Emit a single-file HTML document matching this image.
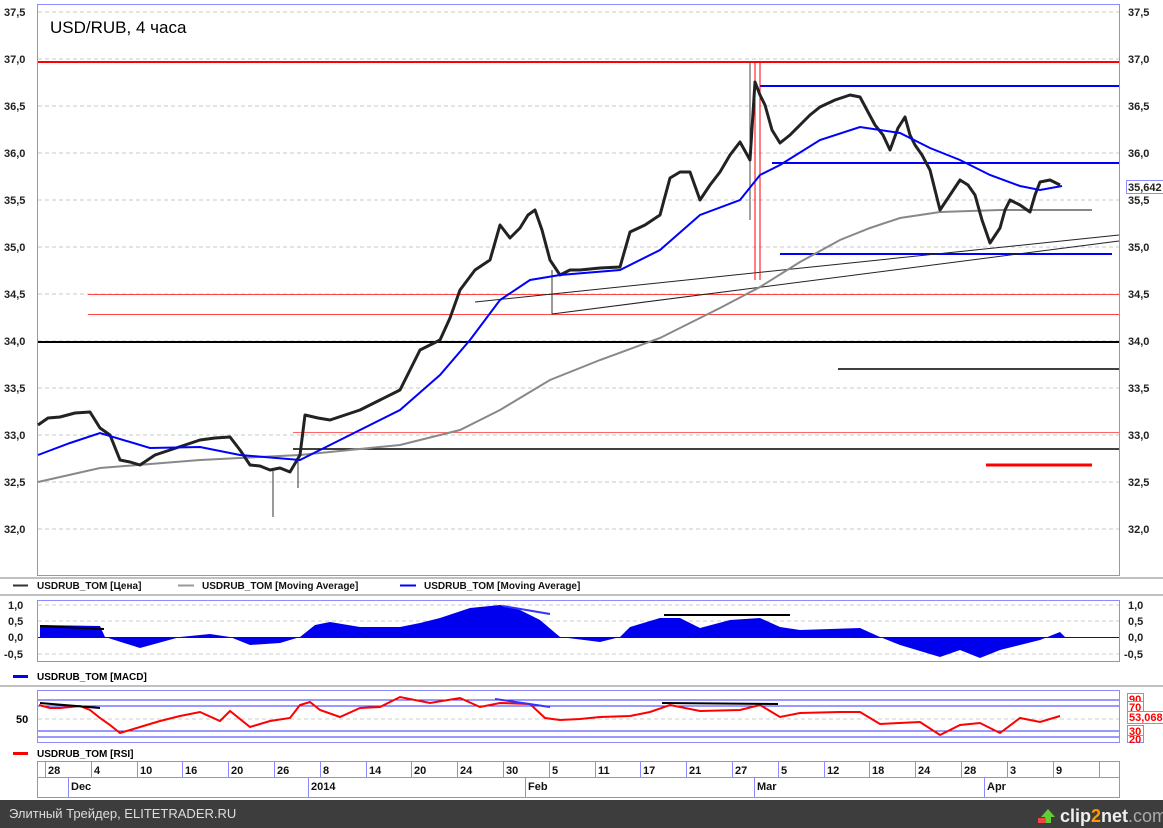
<!DOCTYPE html>
<html><head><meta charset="utf-8"><style>
body{margin:0;width:1163px;height:828px;overflow:hidden;background:#fff;font-family:"Liberation Sans",Arial,sans-serif}
svg{display:block}
</style></head><body>
<svg width="1163" height="828" xmlns="http://www.w3.org/2000/svg" font-family="Liberation Sans, Arial, sans-serif">
<rect width="1163" height="828" fill="#fff"/>
<rect x="37.5" y="4.5" width="1082" height="571" fill="none" stroke="#8c8cff"/>
<g stroke="#c8c8c8" stroke-dasharray="4,3">
<line x1="38" x2="1119" y1="12" y2="12"/><line x1="38" x2="1119" y1="59" y2="59"/><line x1="38" x2="1119" y1="106" y2="106"/><line x1="38" x2="1119" y1="153" y2="153"/><line x1="38" x2="1119" y1="200" y2="200"/><line x1="38" x2="1119" y1="247" y2="247"/><line x1="38" x2="1119" y1="294" y2="294"/><line x1="38" x2="1119" y1="341" y2="341"/><line x1="38" x2="1119" y1="388" y2="388"/><line x1="38" x2="1119" y1="435" y2="435"/><line x1="38" x2="1119" y1="482" y2="482"/><line x1="38" x2="1119" y1="529" y2="529"/>
</g>
<g font-size="11" font-weight="bold" fill="#222">
<text x="4" y="16">37,5</text><text x="4" y="63">37,0</text><text x="4" y="110">36,5</text><text x="4" y="157">36,0</text><text x="4" y="204">35,5</text><text x="4" y="251">35,0</text><text x="4" y="298">34,5</text><text x="4" y="345">34,0</text><text x="4" y="392">33,5</text><text x="4" y="439">33,0</text><text x="4" y="486">32,5</text><text x="4" y="533">32,0</text>
<text x="1128" y="16">37,5</text><text x="1128" y="63">37,0</text><text x="1128" y="110">36,5</text><text x="1128" y="157">36,0</text><text x="1128" y="204">35,5</text><text x="1128" y="251">35,0</text><text x="1128" y="298">34,5</text><text x="1128" y="345">34,0</text><text x="1128" y="392">33,5</text><text x="1128" y="439">33,0</text><text x="1128" y="486">32,5</text><text x="1128" y="533">32,0</text>
</g>
<rect x="1126.5" y="180.5" width="40" height="13" fill="#fff" stroke="#8c8cff"/>
<text x="1128" y="191" font-size="11" font-weight="bold" fill="#222">35,642</text>
<text x="50" y="33" font-size="17" fill="#000">USD/RUB, 4 часа</text>
<line x1="38" x2="1119" y1="62" y2="62" stroke="#f00" stroke-width="2"/>
<line x1="760" x2="1119" y1="86" y2="86" stroke="#00f" stroke-width="2"/>
<line x1="772" x2="1119" y1="163" y2="163" stroke="#00f" stroke-width="2"/>
<line x1="780" x2="1112" y1="254" y2="254" stroke="#00f" stroke-width="2"/>
<line x1="88" x2="1119" y1="294.5" y2="294.5" stroke="#f44"/>
<line x1="88" x2="1119" y1="314.5" y2="314.5" stroke="#f44"/>
<line x1="38" x2="1119" y1="342" y2="342" stroke="#000" stroke-width="2"/>
<line x1="838" x2="1119" y1="369" y2="369" stroke="#000" stroke-width="1.5"/>
<line x1="293" x2="1119" y1="432.5" y2="432.5" stroke="#f66"/>
<line x1="293" x2="1119" y1="449" y2="449" stroke="#000" stroke-width="1.5"/>
<line x1="986" x2="1092" y1="465" y2="465" stroke="#f00" stroke-width="3"/>
<line x1="475" y1="302" x2="1119" y2="235" stroke="#222"/>
<line x1="552" y1="314" x2="1119" y2="241" stroke="#222"/>
<line x1="750" y1="62" x2="750" y2="220" stroke="#444"/>
<line x1="755" y1="62" x2="755" y2="280" stroke="#f00"/>
<line x1="760" y1="62" x2="760" y2="280" stroke="#f00"/>
<polyline fill="none" stroke="#888" stroke-width="2" points="38,482 100,468 200,460 300,455 400,445 460,430 500,410 550,380 600,360 660,338 720,308 760,287 800,262 840,240 870,228 900,218 940,212 1000,210 1060,210 1092,210"/>
<polyline fill="none" stroke="#222" stroke-width="3" stroke-linejoin="round" points="38,425 48,418 60,417 75,413 90,412 100,428 110,435 120,460 130,462 140,465 155,455 170,450 185,445 200,440 215,438 230,437 240,450 250,465 260,466 270,470 280,468 290,472 300,455 305,415 318,418 330,420 345,415 360,410 380,400 400,390 410,370 420,350 430,345 440,340 450,318 460,290 475,270 490,260 500,225 510,238 520,228 528,215 535,210 542,230 550,260 560,275 570,270 580,270 600,268 620,267 630,232 645,225 660,215 670,178 680,172 690,172 700,200 710,185 720,172 730,155 740,142 750,160 755,82 760,95 765,105 772,130 780,143 790,135 800,125 810,115 820,107 835,100 850,95 860,97 868,112 875,125 883,135 890,150 898,128 905,117 910,135 915,145 922,155 930,170 935,190 940,210 950,195 960,180 968,185 975,195 982,220 990,243 1000,228 1005,210 1010,200 1020,205 1030,212 1035,195 1040,182 1050,180 1060,185"/>
<g stroke="#333"><line x1="273" y1="470" x2="273" y2="517"/><line x1="298" y1="460" x2="298" y2="488"/><line x1="552" y1="270" x2="552" y2="314"/></g>
<polyline fill="none" stroke="#00f" stroke-width="2" points="38,455 70,443 100,433 150,448 200,447 240,455 300,460 350,435 400,410 440,375 470,340 500,300 530,280 560,275 620,270 660,250 700,215 740,200 760,175 780,165 820,140 860,127 900,133 930,148 960,160 990,175 1020,186 1040,190 1062,186"/>
<rect x="0" y="577" width="1163" height="2" fill="#c0c0c0"/>
<g font-size="10" font-weight="bold" fill="#111">
<line x1="13" x2="28" y1="585.5" y2="585.5" stroke="#333" stroke-width="2"/><text x="37" y="589">USDRUB_TOM [Цена]</text>
<line x1="178" x2="194" y1="585.5" y2="585.5" stroke="#999" stroke-width="2"/><text x="202" y="589">USDRUB_TOM [Moving Average]</text>
<line x1="400" x2="416" y1="585.5" y2="585.5" stroke="#00f" stroke-width="2"/><text x="424" y="589">USDRUB_TOM [Moving Average]</text>
</g>
<rect x="0" y="594" width="1163" height="2" fill="#c0c0c0"/>
<rect x="37.5" y="600.5" width="1082" height="61" fill="none" stroke="#8c8cff"/>
<g stroke="#ccc" stroke-dasharray="4,3"><line x1="38" x2="1119" y1="605" y2="605"/><line x1="38" x2="1119" y1="621" y2="621"/><line x1="38" x2="1119" y1="654" y2="654"/></g>
<line x1="38" x2="1119" y1="637.5" y2="637.5" stroke="#00f"/>
<path fill="#0000ee" d="M40,637 L40,625 L100,626 L105,637 L140,648 L180,637 L210,634 L230,637 L250,645 L280,643 L300,637 L315,625 L330,622 L360,627 L400,627 L420,623 L440,618 L470,608 L500,605 L520,610 L540,620 L560,637 L600,642 L620,637 L630,627 L660,618 L680,618 L700,628 L730,620 L760,618 L780,627 L800,630 L860,628 L880,637 L900,645 L940,657 L960,650 L980,658 L1000,650 L1020,645 L1040,640 L1060,632 L1065,637 Z"/>
<line x1="40" y1="626" x2="104" y2="629" stroke="#000" stroke-width="2"/>
<line x1="503" y1="606" x2="550" y2="614" stroke="#33f" stroke-width="2"/>
<line x1="664" y1="615" x2="790" y2="615" stroke="#000" stroke-width="2"/>
<g font-size="11" font-weight="bold" fill="#222">
<text x="8" y="609">1,0</text><text x="8" y="625">0,5</text><text x="8" y="641">0,0</text><text x="4" y="658">-0,5</text>
<text x="1128" y="609">1,0</text><text x="1128" y="625">0,5</text><text x="1128" y="641">0,0</text><text x="1124" y="658">-0,5</text>
</g>
<line x1="13" x2="28" y1="676.5" y2="676.5" stroke="#00f" stroke-width="3"/><text x="37" y="680" font-size="10" font-weight="bold">USDRUB_TOM [MACD]</text>
<rect x="0" y="685" width="1163" height="2" fill="#c0c0c0"/>
<rect x="37.5" y="690.5" width="1082" height="52" fill="none" stroke="#8c8cff"/>
<line x1="38" x2="1119" y1="700" y2="700" stroke="#33f"/>
<line x1="38" x2="1119" y1="706" y2="706" stroke="#33f"/>
<line x1="38" x2="1119" y1="719" y2="719" stroke="#ccc" stroke-dasharray="4,3"/>
<line x1="38" x2="1119" y1="731" y2="731" stroke="#33f"/>
<line x1="38" x2="1119" y1="737" y2="737" stroke="#33f"/>
<polyline fill="none" stroke="#f00" stroke-width="2" points="39,705 50,708 60,708 80,706 90,710 100,718 110,725 120,733 140,727 160,721 180,716 200,712 220,721 230,711 250,727 270,721 290,718 300,705 310,702 320,710 340,717 360,708 380,707 400,697 430,703 460,698 480,707 500,703 530,704 545,718 560,720 580,719 600,717 630,716 650,712 670,705 700,711 740,710 760,705 780,717 800,713 840,712 860,712 880,724 920,722 940,735 960,725 980,723 1000,733 1020,718 1040,722 1060,716"/>
<line x1="40" y1="703" x2="100" y2="708" stroke="#000" stroke-width="2"/>
<line x1="495" y1="699" x2="550" y2="707" stroke="#33f" stroke-width="2"/>
<line x1="662" y1="703" x2="778" y2="704" stroke="#000" stroke-width="2"/>
<text x="16" y="723" font-size="11" font-weight="bold">50</text>
<g font-size="11" font-weight="bold" fill="#f00">
<rect x="1127.5" y="693.5" width="16" height="10" fill="#fff" stroke="#8c8cff"/><text x="1129" y="703">90</text>
<rect x="1127.5" y="701.5" width="16" height="10" fill="#fff" stroke="#8c8cff"/><text x="1129" y="711">70</text>
<rect x="1127.5" y="711.5" width="40" height="12" fill="#fff" stroke="#8c8cff"/><text x="1129" y="721">53,068</text>
<rect x="1127.5" y="733.5" width="16" height="9" fill="#fff" stroke="#8c8cff"/><text x="1129" y="743">20</text>
<rect x="1127.5" y="725.5" width="16" height="10" fill="#fff" stroke="#8c8cff"/><text x="1129" y="735">30</text>
</g>
<line x1="13" x2="28" y1="753.5" y2="753.5" stroke="#f00" stroke-width="3"/><text x="37" y="757" font-size="10" font-weight="bold">USDRUB_TOM [RSI]</text>
<rect x="37.5" y="761.5" width="1082" height="36" fill="#fff" stroke="#8c8cff"/>
<line x1="38" x2="1119" y1="777.5" y2="777.5" stroke="#8c8cff"/>
<g stroke="#8c8cff">
<line x1="45.5" x2="45.5" y1="762" y2="778"/><line x1="91.5" x2="91.5" y1="762" y2="778"/><line x1="137.5" x2="137.5" y1="762" y2="778"/><line x1="182.5" x2="182.5" y1="762" y2="778"/><line x1="228.5" x2="228.5" y1="762" y2="778"/><line x1="274.5" x2="274.5" y1="762" y2="778"/><line x1="320.5" x2="320.5" y1="762" y2="778"/><line x1="366.5" x2="366.5" y1="762" y2="778"/><line x1="411.5" x2="411.5" y1="762" y2="778"/><line x1="457.5" x2="457.5" y1="762" y2="778"/><line x1="503.5" x2="503.5" y1="762" y2="778"/><line x1="549.5" x2="549.5" y1="762" y2="778"/><line x1="595.5" x2="595.5" y1="762" y2="778"/><line x1="640.5" x2="640.5" y1="762" y2="778"/><line x1="686.5" x2="686.5" y1="762" y2="778"/><line x1="732.5" x2="732.5" y1="762" y2="778"/><line x1="778.5" x2="778.5" y1="762" y2="778"/><line x1="824.5" x2="824.5" y1="762" y2="778"/><line x1="869.5" x2="869.5" y1="762" y2="778"/><line x1="915.5" x2="915.5" y1="762" y2="778"/><line x1="961.5" x2="961.5" y1="762" y2="778"/><line x1="1007.5" x2="1007.5" y1="762" y2="778"/><line x1="1053.5" x2="1053.5" y1="762" y2="778"/><line x1="1099.5" x2="1099.5" y1="762" y2="778"/>
<line x1="68.5" x2="68.5" y1="778" y2="797"/><line x1="308.5" x2="308.5" y1="778" y2="797"/><line x1="525.5" x2="525.5" y1="778" y2="797"/><line x1="754.5" x2="754.5" y1="778" y2="797"/><line x1="984.5" x2="984.5" y1="778" y2="797"/>
</g>
<g font-size="11" font-weight="bold" fill="#111">
<text x="48" y="774">28</text><text x="94" y="774">4</text><text x="140" y="774">10</text><text x="185" y="774">16</text><text x="231" y="774">20</text><text x="277" y="774">26</text><text x="323" y="774">8</text><text x="369" y="774">14</text><text x="414" y="774">20</text><text x="460" y="774">24</text><text x="506" y="774">30</text><text x="552" y="774">5</text><text x="598" y="774">11</text><text x="643" y="774">17</text><text x="689" y="774">21</text><text x="735" y="774">27</text><text x="781" y="774">5</text><text x="827" y="774">12</text><text x="872" y="774">18</text><text x="918" y="774">24</text><text x="964" y="774">28</text><text x="1010" y="774">3</text><text x="1056" y="774">9</text>
<text x="71" y="790">Dec</text><text x="311" y="790">2014</text><text x="528" y="790">Feb</text><text x="757" y="790">Mar</text><text x="987" y="790">Apr</text>
</g>
<rect x="0" y="800" width="1163" height="28" fill="#3d3d3d"/>
<text x="9" y="818" font-size="13" fill="#ddd">Элитный Трейдер, ELITETRADER.RU</text>
<path d="M1041,817 l7,-8 l7,8 h-4 v6 h-6 v-6z" fill="#6c3"/>
<rect x="1038" y="818" width="8" height="5" fill="#e44"/>
<text x="1060" y="822" font-size="18" font-weight="bold" fill="#eee">clip<tspan fill="#f90">2</tspan>net<tspan fill="#aaa" font-weight="normal">.com</tspan></text>
</svg>
</body></html>
